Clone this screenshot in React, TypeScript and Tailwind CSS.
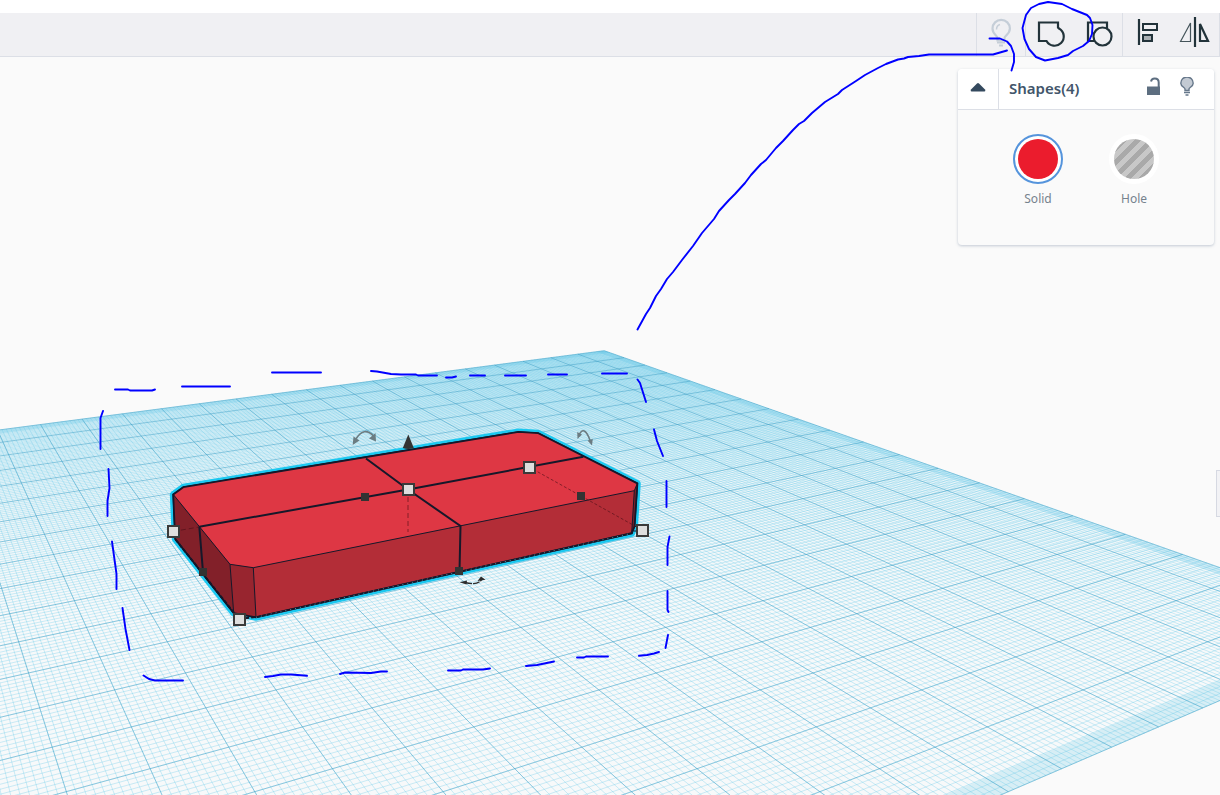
import type { ReactNode } from 'react';

type Point = [number, number];

// Perspective projection of a grid cell (row, column) to the viewport
const project = (row: number, col: number): Point => {
  const w = 39.89 - 2 * row + col;
  return [(34174 + 319 * row + 2656 * col) / w, 81.7 + 21221 / w];
};

const ROWS: Point = [-16, 4];
const COLS: Point = [-13, 7];

const toPath = (points: Point[]) =>
  points.map(([x, y], i) => `${i ? 'L' : 'M'}${x.toFixed(1)} ${y.toFixed(1)}`).join('');

const quad = (r0: number, r1: number, c0: number, c1: number) =>
  toPath([project(r0, c0), project(r0, c1), project(r1, c1), project(r1, c0)]) + 'Z';

const gridLines = (step: number) => {
  const lines: string[] = [];
  for (let i = 0; i <= 20 / step; i++) {
    const row = ROWS[0] + i * step;
    const col = COLS[0] + i * step;
    lines.push(toPath([project(row, COLS[0]), project(row, COLS[1])]));
    lines.push(toPath([project(ROWS[0], col), project(ROWS[1], col)]));
  }
  return lines.join('');
};

const plate = quad(ROWS[0], ROWS[1], COLS[0], COLS[1]);
const minorLines = gridLines(0.1);
const majorLines = gridLines(1);

const silhouette =
  'M173.3 494.5L183.3 487.3L518.5 432L538.3 433.3L637.3 483.5L634.5 526L631.7 533.3L256 617.3L233.7 613L175.3 539Z';

const cornerHandles: Point[] = [
  [173, 531],
  [239, 619],
  [408, 489],
  [529, 467],
  [642, 530],
];

const edgeHandles: Point[] = [
  [365, 497],
  [203, 572],
  [459, 571],
  [581, 496],
];

const penStrokes = [
  // dashed outline, top edge
  'M115 389.5H128L130 390.5H152L155 389.5',
  'M182 386.5H230',
  'M272 372.5H321',
  'M371 371L377 371.5L391 374L401 374.5H416L418 375.5H437',
  'M446 377.5H452L456 376.5',
  'M470 375.5H485',
  'M505 375.5H526',
  'M548 374.5H567',
  'M602 373.5H627',
  // right edge
  'M637.5 379.5L640 383L646 402',
  'M654 429.5L657 441L663 456',
  'M666.5 481V507',
  'M669.5 536.5L667.5 547V565',
  'M667.5 591V610L668.5 612',
  'M668 635L665.5 648',
  // bottom edge
  'M639 655.8L647 655L654 653.5L659 652',
  'M577 657.5H584L586 656.5H608',
  'M526 666L537 665L554 661.5',
  'M448 670.5H461L463 669.5H483L490 668.5',
  'M340 674L345 672.5L371 673L381 671.5H387',
  'M265 677L273 676L281 674.5H291L307 675.8',
  'M143.5 675.5L149 679L155 680.5H183',
  // left edge
  'M129.5 650L125.5 629L122.5 608',
  'M116.5 589V574L114 556L112 541.5',
  'M107.5 516V501L109.5 488L108.5 469',
  'M100.5 449V418L103 411',
  // arrow to the toolbar
  'M637.500 329.500L646 314L650 308L656 296L661 289L667 279L673 272L682 260L693 246L702 233L714 219L719 211L729 200L735 194L745 183L751 175L761 164L766 160L776 148L783 141L793 130L799 124L804 121L812 113L825 102L838 94L842 90L856 81L865 75L878 68L886 64L898 59.500L904 58.500L908 57L919 56L929 54.500H993L1007 50.500',
  'M989.5 38.5H1000L1007 41.5L1011 46L1014 54V62L1011.5 70.5',
  'M1048 2L1062 4L1072 9L1087 15L1090 18L1092.500 25L1092 34L1089 41L1083 46L1073 51L1068 55L1058 58L1045 60.500L1036 57L1029 49L1024.500 39L1022.500 28L1026 15L1031 8L1039 4Z',
];

function Workplane() {
  return (
    <svg className="pointer-events-none absolute inset-0 h-full w-full" role="img" aria-label="Workplane">
      <defs>
        <linearGradient id="depth" x1="0" y1="350" x2="0" y2="795" gradientUnits="userSpaceOnUse">
          <stop offset="0" stopColor="#7fd0ea" stopOpacity="0.3" />
          <stop offset="0.3" stopColor="#a9e0f1" stopOpacity="0.12" />
          <stop offset="0.6" stopColor="#a9e0f1" stopOpacity="0" />
        </linearGradient>
      </defs>
      <path d={plate} fill="#f7f9fa" />
      <path d={plate} fill="url(#depth)" />
      <path d={quad(3.71, 4, COLS[0], COLS[1])} fill="#5cc5e2" fillOpacity="0.2" />
      <path d={quad(ROWS[0], ROWS[1], 6.7, 7)} fill="#3fb8df" fillOpacity="0.2" />
      <path d={quad(-16, -15.7, COLS[0], COLS[1])} fill="#3fb8df" fillOpacity="0.2" />
      <path d={minorLines} fill="none" stroke="#55c5e6" strokeOpacity="0.29" />
      <path d={majorLines} fill="none" stroke="#3197bf" strokeOpacity="0.42" />

      {/* red block */}
      <path d={silhouette} fill="none" stroke="#1cc8f0" strokeWidth="7" strokeLinejoin="round" />
      <path d={silhouette} fill="#b32d37" stroke="#16182a" strokeWidth="2" strokeLinejoin="round" />
      <path
        d="M173.3 494.5L183.3 487.3L518.5 432L538.3 433.3L637.3 483.5L634.3 490.7L253.3 567.7L230 564.3Z"
        fill="#de3744"
      />
      <path d="M173.3 494.5L230 564.3L233.7 613L175.3 539Z" fill="#822029" />
      <path d="M230 564.3L253.3 567.7L256 617.3L233.7 613Z" fill="#98252f" />
      <path d="M637.3 483.5L634.3 490.7L631.7 533.3L634.5 526Z" fill="#7a1f28" />
      <g fill="none" stroke="#16182a">
        <path d="M173.3 494.5L230 564.3L253.3 567.7L634.3 490.7L637.3 483.5M230 564.3L233.7 613M253.3 567.7L256 617.3M634.3 490.7L631.7 533.3" />
        <path
          d="M199.3 526.7L408 489.5L583.3 456.7M366 458.5L408 489.5L460.5 526L459.5 571M199.3 526.7L203 572"
          strokeWidth="2"
        />
        <path d={silhouette} strokeWidth="1.6" />
        <path d="M256 617.3L631.7 533.3" stroke="#7adcf2" strokeOpacity="0.6" strokeDasharray="1 4" />
        <path d="M175.5 539.5L239 619L256 617" strokeDasharray="4 2" strokeWidth="2" />
        <path d="M634 526.5H642M634 531H642" />
      </g>
      <g fill="none" stroke="#4a0d16" strokeOpacity="0.6">
        <path d="M173 531.5L199 527M408 497V532" strokeDasharray="5 3" />
        <path d="M529 467L642 530" strokeDasharray="3 2" />
      </g>

      <path d="M408.3 434.5L413.8 448Q408.3 450 402.8 448Z" fill="#333" />
      {edgeHandles.map(([x, y]) => (
        <rect key={`${x}-${y}`} x={x - 4} y={y - 4} width="8" height="8" fill="#333" />
      ))}
      {cornerHandles.map(([x, y]) => (
        <rect key={`${x}-${y}`} x={x - 5} y={y - 5} width="11" height="11" fill="#dedede" stroke="#3a3a3a" strokeWidth="2" />
      ))}

      {/* rotation arrows */}
      <g fill="none" stroke="#6b7c82" strokeWidth="1.6">
        <path d="M356 439Q364 426 373.5 436" />
        <path d="M579 435Q584 424.5 590 440" />
      </g>
      <path
        d="M352.7 445L353.5 436.5L359.5 440.5ZM376 441.5L369 438.5L375.5 433ZM577.5 439L577.2 432L582 434.5ZM592 445.5L587.5 440.5L592.8 439Z"
        fill="#6b7c82"
      />
      <path d="M465 582.5Q478 586 482 579" fill="none" stroke="#2d2d2d" strokeWidth="1.4" strokeDasharray="7 1" />
      <path d="M459.5 582.2L467 580.5L466.5 584.5ZM485.5 579.8L477.5 581L481 576.5Z" fill="#2d2d2d" />
    </svg>
  );
}

function PenStrokes() {
  return (
    <svg className="pointer-events-none absolute inset-0 h-full w-full" aria-hidden="true">
      <path
        d={penStrokes.join('')}
        fill="none"
        stroke="#0000ff"
        strokeWidth="1.9"
        strokeLinecap="round"
        strokeLinejoin="round"
      />
    </svg>
  );
}

function ToolButton({ label, className = '', children }: { label: string; className?: string; children: ReactNode }) {
  return (
    <button
      type="button"
      aria-label={label}
      className={`box-content flex w-12 items-center justify-center ${className}`}
    >
      <svg
        width="32"
        height="31"
        viewBox="0 0 32 31"
        fill="none"
        stroke="#22333a"
        strokeWidth="2.2"
        className="overflow-visible"
      >
        {children}
      </svg>
    </button>
  );
}

function Toolbar() {
  return (
    <header className="flex h-11 justify-end border-b border-[#dcdfe6] bg-[#f0f0f3]">
      <div className="flex border-r border-[#dcdfe6]">
        <ToolButton label="Show all" className="border-l border-[#dcdfe6]">
          <g stroke="#c5ced8">
            <path d="M12.5 21.5v-2.500C12.500 17 7.500 15 7.500 9.500a8.700 8.700 0 0 1 17.400 0c0 5.500-5.400 7.500-5.400 9.500v2.500Z" />
            <path d="M11.500 10.500Q11.500 6.500 15 5.500" strokeWidth="1.500" />
            <path d="M12 23.500h8M14 26.500h4" />
          </g>
        </ToolButton>
        <ToolButton label="Group" className="border-l border-[#dcdfe6]">
          <path d="M5 3.500H24V8.500L25 9.500A9.200 9.200 0 1 1 12.500 22H5Z" />
        </ToolButton>
        <ToolButton label="Ungroup">
          <path d="M6 3.500H25V22H6Z" />
          <circle cx="20.5" cy="17.500" r="9" fill="#f0f0f3" />
        </ToolButton>
        <ToolButton label="Align" className="border-l border-[#dcdfe6]">
          <path d="M8 0V26" />
          <path d="M12 5H26V11H12Z" strokeWidth="2" />
          <path d="M12 16H21V22H12Z" fill="#a9afb3" strokeWidth="2" />
        </ToolButton>
        <ToolButton label="Mirror">
          <path d="M16 -2V28" />
          <path d="M1.5 22.500L11.500 4V22.500Z" strokeWidth="1.2" stroke="#44545a" />
          <path d="M21 5L29 22H21Z" />
        </ToolButton>
      </div>
    </header>
  );
}

function ShapePanel() {
  return (
    <section className="relative w-64 rounded bg-[#fafafa] shadow-[0_1px_3px_rgba(90,110,140,0.35)]">
      <div className="flex h-[41px] items-center rounded-t border-b border-[#dcdfe6] bg-white">
        <button
          type="button"
          aria-label="Collapse"
          className="flex h-full w-[41px] items-center justify-center border-r border-[#dcdfe6]"
        >
          <svg width="16" height="14" viewBox="0 0 16 14" fill="#34495e">
            <path d="M8 1Q8.6 1 9 1.4L15 7.6Q16 9.5 14.500 9.500H1.500Q0 9.500 1 7.600L7 1.400Q7.400 1 8 1Z" />
          </svg>
        </button>
        <h2 className="flex-1 pb-0.5 pl-2.5 text-[15px] font-semibold text-[#42556a]">Shapes(4)</h2>
        <div className="flex items-center gap-3.5 pr-[17px] pb-1">
          <button type="button" aria-label="Unlock">
            <svg width="20" height="20" viewBox="0 0 20 20">
              <path d="M4 9.5h13v8.5H4z" fill="#5d6e80" />
              <path d="M8 4.5Q8.500 1.500 11.700 1.500Q15.700 1.500 15.700 5.500V10" fill="none" stroke="#5d6e80" strokeWidth="2" />
            </svg>
          </button>
          <button type="button" aria-label="Hide">
            <svg width="20" height="20" viewBox="0 0 20 20" stroke="#66778a" strokeWidth="1.4">
              <path d="M8 13.500v-1.500C8 10.500 3.800 9.500 3.800 6.200a6.200 6.200 0 0 1 12.400 0c0 3.300-4.200 4.300-4.200 5.800v1.500Z" fill="#c3cad3" />
              <path d="M7 15.500h6M8.500 18h3" />
            </svg>
          </button>
        </div>
      </div>
      <div className="flex justify-center pt-6 pb-[38px] text-[#76828e]">
        <label className="flex w-24 flex-col items-center gap-[7px] text-xs">
          <input type="radio" name="kind" defaultChecked className="peer sr-only" />
          <span className="flex size-[50px] items-center justify-center rounded-full border-2 border-white bg-white peer-checked:border-[#5594dc]">
            <span className="size-10 rounded-full bg-[#eb1c2d]" />
          </span>
          <span>Solid</span>
        </label>
        <label className="flex w-24 flex-col items-center gap-[7px] text-xs">
          <input type="radio" name="kind" className="peer sr-only" />
          <span className="flex size-[50px] items-center justify-center rounded-full border-2 border-white bg-white peer-checked:border-[#5594dc]">
            <span className="size-10 rounded-full bg-[repeating-linear-gradient(135deg,#c8c8c8_0px,#c8c8c8_5px,#a9a9a9_5px,#a9a9a9_10px)]" />
          </span>
          <span>Hole</span>
        </label>
      </div>
    </section>
  );
}

export default function App() {
  return (
    <div className="relative flex min-h-screen flex-col overflow-hidden bg-[#fafafa] pt-[13px] font-['Noto_Sans',sans-serif] before:absolute before:inset-x-0 before:top-0 before:h-[13px] before:bg-white">
      <Workplane />
      <Toolbar />
      <main className="relative flex flex-1 flex-col items-end">
        <div className="pt-3 pr-1.5">
          <ShapePanel />
        </div>
        <button
          type="button"
          aria-label="Open shapes panel"
          className="mt-[225px] h-[47px] w-1 border border-r-0 border-[#d6d9e2] bg-[#f2f2f5]"
        />
      </main>
      <PenStrokes />
    </div>
  );
}
